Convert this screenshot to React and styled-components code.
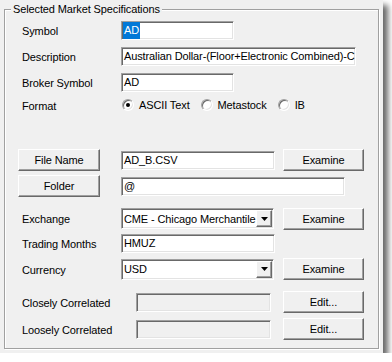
import React from 'react'
import styled, { createGlobalStyle, css } from 'styled-components'

const Global = createGlobalStyle`
  body {
    margin: 0;
    background: #fff;
    font-family: "Liberation Sans", Arial, sans-serif;
    font-size: 11px;
    letter-spacing: -0.12px;
    color: #000;
  }
`

const sunken = css`
  box-sizing: border-box;
  border: 1px solid;
  border-color: #a0a0a0 #fff #fff #a0a0a0;
  box-shadow: inset 1px 1px 0 #696969, inset -1px -1px 0 #e3e3e3;
`

const raised = css`
  box-sizing: border-box;
  border: 1px solid;
  border-color: #fff #696969 #696969 #fff;
  box-shadow: inset -1px -1px 0 #a0a0a0;
  background: #f0f0f0;
`

export default function App() {
  return (
    <>
      <Global />
      <Panel>
        <Group>
          <Legend>Selected Market Specifications</Legend>

          <Row $mt={4} $h={20}>
            <Label>Symbol</Label>
            <Field $w={113}><Selected>AD</Selected></Field>
          </Row>
          <Row $mt={6} $h={20}>
            <Label>Description</Label>
            <Field $w={235}>Australian Dollar-(Floor+Electronic Combined)-CME</Field>
          </Row>
          <Row $mt={6} $h={20}>
            <Label>Broker Symbol</Label>
            <Field $w={113}>AD</Field>
          </Row>
          <Row $mt={4} $h={18}>
            <Label>Format</Label>
            <RadioItem><Radio $checked />ASCII Text</RadioItem>
            <RadioItem><Radio />Metastock</RadioItem>
            <RadioItem><Radio />IB</RadioItem>
          </Row>

          <Row $mt={35} $h={22}>
            <LeftButton>File Name</LeftButton>
            <Field $w={154}>AD_B.CSV</Field>
            <SideButton>Examine</SideButton>
          </Row>
          <Row $mt={4} $h={22}>
            <LeftButton>Folder</LeftButton>
            <Field $w={224}>@</Field>
          </Row>

          <Row $mt={11} $h={21}>
            <Label>Exchange</Label>
            <Combo>
              <ComboText>CME - Chicago Merchantile</ComboText>
              <DropButton><Arrow /></DropButton>
            </Combo>
            <SideButton>Examine</SideButton>
          </Row>
          <Row $mt={4} $h={20}>
            <Label>Trading Months</Label>
            <Field $w={154}>HMUZ</Field>
          </Row>
          <Row $mt={5} $h={22}>
            <Label>Currency</Label>
            <Combo>
              <ComboText>USD</ComboText>
              <DropButton><Arrow /></DropButton>
            </Combo>
            <SideButton>Examine</SideButton>
          </Row>

          <Row $mt={11} $h={22}>
            <Label $w={131}>Closely Correlated</Label>
            <Field $w={135} $disabled />
            <SideButton>Edit...</SideButton>
          </Row>
          <Row $mt={5} $h={22}>
            <Label $w={131}>Loosely Correlated</Label>
            <Field $w={135} $disabled />
            <SideButton>Edit...</SideButton>
          </Row>
        </Group>
      </Panel>
    </>
  )
}

function Arrow() {
  return (
    <svg width="7" height="4" viewBox="0 0 7 4">
      <polygon points="0,0 7,0 3.5,4" fill="#000" />
    </svg>
  )
}

const Panel = styled.div`
  width: 383px;
  height: 353px;
  box-sizing: border-box;
  padding: 3px 0 0 4px;
  background: #f0f0f0;
  box-shadow: 5px 5px 6px rgba(0, 0, 0, 0.6);
`

const Group = styled.fieldset`
  margin: 0;
  padding: 0;
  min-width: 0;
  width: 375px;
  height: 346px;
  box-sizing: border-box;
  border: 1px solid #a0a0a0;
  box-shadow: 1px 1px 0 #fff, inset 1px 1px 0 #fff;
`

const Legend = styled.legend`
  margin-left: 6px;
  padding: 0 2px;
  line-height: 13px;
  background: #f0f0f0;
`

const Row = styled.div`
  display: flex;
  align-items: center;
  height: ${p => p.$h}px;
  margin-top: ${p => p.$mt}px;
`

const Label = styled.div`
  box-sizing: border-box;
  flex: none;
  width: ${p => p.$w || 116}px;
  padding: 1px 0 0 17px;
  white-space: nowrap;
`

const Field = styled.div`
  ${sunken};
  flex: none;
  display: flex;
  align-items: center;
  width: ${p => p.$w}px;
  height: 19px;
  padding: 0 2px;
  background: ${p => (p.$disabled ? '#f0f0f0' : '#fff')};
  white-space: nowrap;
  overflow: hidden;
`

const Selected = styled.span`
  margin-left: -1px;
  padding: 1px 1px;
  line-height: 15px;
  background: #0078d7;
  color: #fff;
`

const Combo = styled.div`
  ${sunken};
  flex: none;
  display: flex;
  align-items: center;
  width: 153px;
  height: 21px;
  padding: 0 1px 0 2px;
  background: #fff;
`

const ComboText = styled.div`
  flex: 1;
  overflow: hidden;
  white-space: nowrap;
`

const DropButton = styled.div`
  ${raised};
  flex: none;
  display: flex;
  align-items: center;
  justify-content: center;
  width: 16px;
  height: 17px;
`

const ButtonBase = styled.div`
  ${raised};
  flex: none;
  display: flex;
  align-items: center;
  justify-content: center;
  height: 22px;
`

const LeftButton = styled(ButtonBase)`
  width: 82px;
  margin: 0 21px 0 13px;
`

const SideButton = styled(ButtonBase)`
  width: 81px;
  margin: 0 14px 0 auto;
`

const RadioItem = styled.label`
  display: flex;
  align-items: center;
  gap: 5px;
  margin: 0 10px 0 1px;
  white-space: nowrap;
`

const Radio = styled.span`
  ${sunken};
  position: relative;
  flex: none;
  width: 12px;
  height: 12px;
  border-radius: 50%;
  background: #fff;

  &::after {
    content: '';
    display: ${p => (p.$checked ? 'block' : 'none')};
    position: absolute;
    left: 3px;
    top: 3px;
    width: 4px;
    height: 4px;
    border-radius: 50%;
    background: #000;
  }
`
